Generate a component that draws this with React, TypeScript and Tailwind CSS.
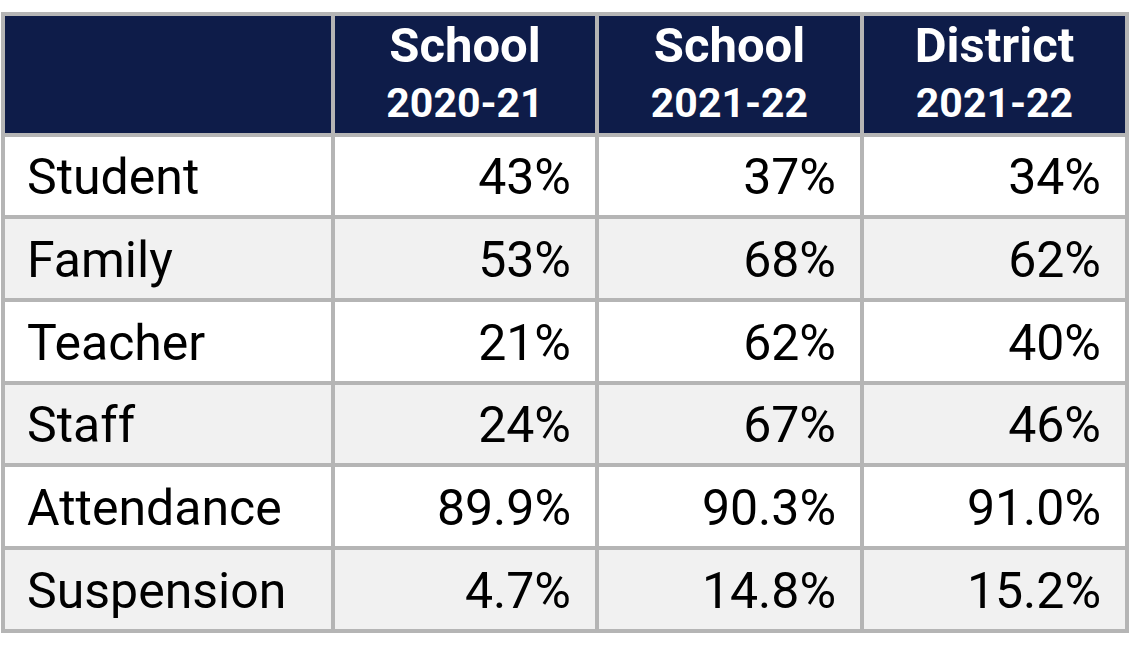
import React from "react";

const rows: { label: string; vals: string[]; h: string; alt: boolean }[] = [
  { label: "Student", vals: ["43%", "37%", "34%"], h: "h-[78px]", alt: false },
  { label: "Family", vals: ["53%", "68%", "62%"], h: "h-[79px]", alt: true },
  { label: "Teacher", vals: ["21%", "62%", "40%"], h: "h-[79px]", alt: false },
  { label: "Staff", vals: ["24%", "67%", "46%"], h: "h-[78px]", alt: true },
  { label: "Attendance", vals: ["89.9%", "90.3%", "91.0%"], h: "h-[79px]", alt: false },
  { label: "Suspension", vals: ["4.7%", "14.8%", "15.2%"], h: "h-[79px]", alt: true },
];

const headers = [
  ["School", "2020-21"],
  ["School", "2021-22"],
  ["District", "2021-22"],
];

export default function App() {
  return (
    <div
      className="w-[1130px] h-[651px] bg-white pt-[12px] pl-[1px]"
      style={{ fontFamily: "Roboto, 'Noto Sans', sans-serif" }}
    >
      <div className="grid w-[1128px] grid-cols-[326px_260px_261px_261px] gap-[4px] bg-[#b5b5b5] p-[4px]">
        <div className="h-[117px] bg-[#0e1c49]" />
        {headers.map(([a, b], i) => (
          <div
            key={i}
            className="flex h-[117px] flex-col items-center justify-center bg-[#0e1c49] font-bold text-white"
          >
            <div className="text-[49px] leading-[57px]">{a}</div>
            <div className="text-[41px] leading-[58px]">{b}</div>
          </div>
        ))}
        {rows.map((r, ri) => (
          <React.Fragment key={ri}>
            <div
              className={`flex ${r.h} items-center pl-[22px] pt-[3px] text-[50px] text-black ${
                r.alt ? "bg-[#f1f1f1]" : "bg-white"
              }`}
            >
              {r.label}
            </div>
            {r.vals.map((v, vi) => (
              <div
                key={vi}
                className={`flex ${r.h} items-center justify-end pr-[24px] pt-[3px] text-[50px] text-black ${
                  r.alt ? "bg-[#f1f1f1]" : "bg-white"
                }`}
              >
                {v}
              </div>
            ))}
          </React.Fragment>
        ))}
      </div>
    </div>
  );
}
